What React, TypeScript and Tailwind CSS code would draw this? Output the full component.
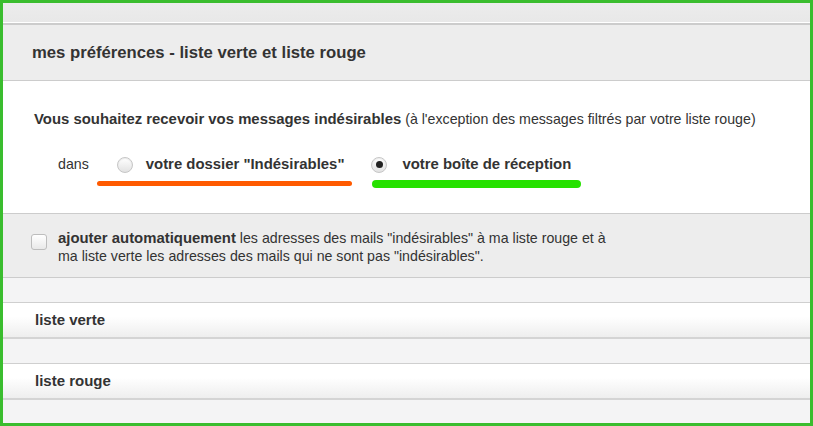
const font = { fontFamily: '"Liberation Sans", Arial, sans-serif' };

const Radio = ({ checked }: { checked?: boolean }) => (
  <span className="flex items-center justify-center w-[16px] h-[16px] rounded-full border border-[#c6c6c6] bg-gradient-to-b from-[#ffffff] to-[#e2e2e2] shadow-[inset_0_1px_1px_rgba(0,0,0,0.08)] shrink-0">
    {checked && <span className="w-[7px] h-[7px] rounded-full bg-[#222]" />}
  </span>
);

const ListRow = ({ label }: { label: string }) => (
  <div className="h-[36px] flex items-center pl-[32px] bg-gradient-to-b from-white from-40% to-[#eeeeee] border-b-2 border-b-[#d4d4d4] text-[15px] font-bold text-[#333] shrink-0">
    {label}
  </div>
);

export default function App() {
  return (
    <div
      style={font}
      className="w-[813px] h-[426px] border-[3px] border-[#3abd2e] bg-[#f4f4f5] flex flex-col overflow-hidden"
    >
      {/* top strip */}
      <div className="h-[20px] bg-gradient-to-b from-[#ececec] to-[#e8e8e8] border-b border-b-white shrink-0" />
      <div className="h-[2px] bg-[#cccccc] shrink-0" />

      {/* header */}
      <div className="h-[56px] bg-[#ededed] border-b border-b-[#cccccc] flex items-center pl-[29px] shrink-0">
        <h1 className="text-[16.7px] font-bold text-[#333]">
          mes préférences - liste verte et liste rouge
        </h1>
      </div>

      {/* junk mail destination */}
      <div className="h-[133px] bg-white border-b border-b-[#cccccc] pl-[31px] pt-[30px] shrink-0 text-[14.2px] text-[#333]">
        <p className="leading-[17px]">
          <span className="font-bold text-[14.9px]">Vous souhaitez recevoir vos messages indésirables</span>{" "}
          (à l'exception des messages filtrés par votre liste rouge)
        </p>
        <div className="relative flex items-center mt-[28px] h-[17px]">
          <span className="ml-[24px]">dans</span>
          <span className="ml-[28px]">
            <Radio />
          </span>
          <span className="ml-[13px] font-bold text-[14.9px]">votre dossier "Indésirables"</span>
          <span className="ml-[27px]">
            <Radio checked />
          </span>
          <span className="ml-[15px] font-bold text-[14.9px]">votre boîte de réception</span>

          {/* annotation marks */}
          <span className="absolute left-[63px] top-[25px] w-[255px] h-[5px] rounded-full bg-[#ff5a00]" />
          <span className="absolute left-[338px] top-[24px] w-[209px] h-[8px] rounded-full bg-[#26e100]" />
        </div>
      </div>

      {/* auto add */}
      <div className="h-[64px] bg-[#ededed] border-b border-b-[#cccccc] flex items-start pl-[28px] pt-[15px] shrink-0">
        <span className="mt-[5px] w-[16px] h-[16px] rounded-[3px] border border-[#bdbdbd] bg-gradient-to-b from-white to-[#e9e9e9] shrink-0" />
        <p className="ml-[11px] text-[14.2px] leading-[18px] text-[#333]">
          <span className="font-bold text-[14.9px]">ajouter automatiquement</span> les adresses des mails
          "indésirables" à ma liste rouge et à
          <br />
          ma liste verte les adresses des mails qui ne sont pas "indésirables".
        </p>
      </div>

      <div className="h-[25px] bg-[#f4f4f5] border-b border-b-[#cfcfcf] shrink-0" />
      <ListRow label="liste verte" />
      <div className="h-[25px] bg-[#f4f4f5] border-b border-b-[#cfcfcf] shrink-0" />
      <ListRow label="liste rouge" />
      <div className="flex-1 bg-[#f4f4f5]" />
    </div>
  );
}
